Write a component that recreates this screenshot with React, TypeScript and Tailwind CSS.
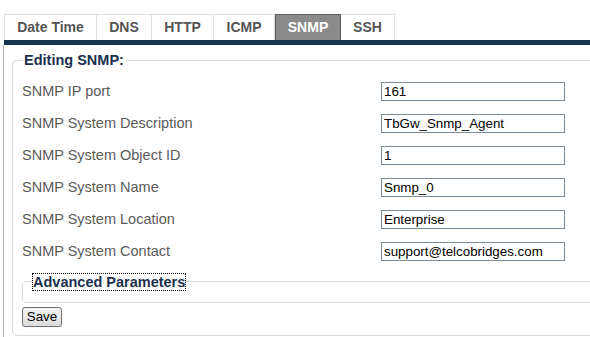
const tabs = [
  { name: "Date Time", w: "w-[93px]" },
  { name: "DNS", w: "w-[55px]" },
  { name: "HTTP", w: "w-[62px]" },
  { name: "ICMP", w: "w-[61px]" },
  { name: "SNMP", w: "w-[66px]", active: true },
  { name: "SSH", w: "w-[54px]" },
];

const fields = [
  { label: "SNMP IP port", value: "161" },
  { label: "SNMP System Description", value: "TbGw_Snmp_Agent" },
  { label: "SNMP System Object ID", value: "1" },
  { label: "SNMP System Name", value: "Snmp_0" },
  { label: "SNMP System Location", value: "Enterprise" },
  { label: "SNMP System Contact", value: "support@telcobridges.com" },
];

const App = () => {
  return (
    <div className="w-[590px] h-[337px] overflow-hidden bg-white font-['Liberation_Sans',Arial,sans-serif]">
      <div className="flex pt-[14px] pl-[4px]">
        {tabs.map((t) =>
          t.active ? (
            <div
              key={t.name}
              className={`${t.w} h-[26px] flex items-center justify-center border border-b-0 border-[#5c5c5c] bg-[#8a8a8a] text-white text-[14px] font-bold`}
            >
              {t.name}
            </div>
          ) : (
            <div
              key={t.name}
              className={`${t.w} h-[26px] flex items-center justify-center border border-b-0 border-l-0 first:border-l border-[#e0e0e0] text-[#555] text-[14px] font-bold`}
            >
              {t.name}
            </div>
          )
        )}
      </div>
      <div className="ml-[4px] h-[5px] bg-[#14344f]" />

      <div className="ml-[3px] border-l border-[#b4b4b4] h-[300px] pl-[8px] pt-[5px]">
        <fieldset className="w-[600px] border border-[#d3dbe0] rounded-[5px] pl-[9px] pb-[7px]">
          <legend className="px-[2px] text-[14.5px] font-bold text-[#1b2f4f]">
            Editing SNMP:
          </legend>
          <div className="pt-[4px]">
            {fields.map((f) => (
              <div key={f.label} className="flex items-center h-[32px]">
                <label className="w-[359px] text-[14.5px] text-[#5a5a5a]">
                  {f.label}
                </label>
                <input
                  readOnly
                  value={f.value}
                  className="w-[184px] h-[19px] border border-[#7d8c99] px-[2px] text-[13.33px] text-black outline-none"
                />
              </div>
            ))}
          </div>

          <fieldset className="mt-[6px] w-[590px] border border-[#d3dbe0] rounded-[5px] h-[29px]">
            <legend className="ml-[10px] text-[14.5px] font-bold text-[#1b2f4f] outline-1 outline-dotted outline-black leading-[16px]">
              Advanced Parameters
            </legend>
          </fieldset>

          <button className="mt-[4px] w-[40px] h-[20px] border border-[#707070] rounded-[3px] bg-gradient-to-b from-[#f4f4f4] to-[#dcdcdc] text-[13.33px] text-black leading-none">
            Save
          </button>
        </fieldset>
      </div>
    </div>
  );
};

export default App;
